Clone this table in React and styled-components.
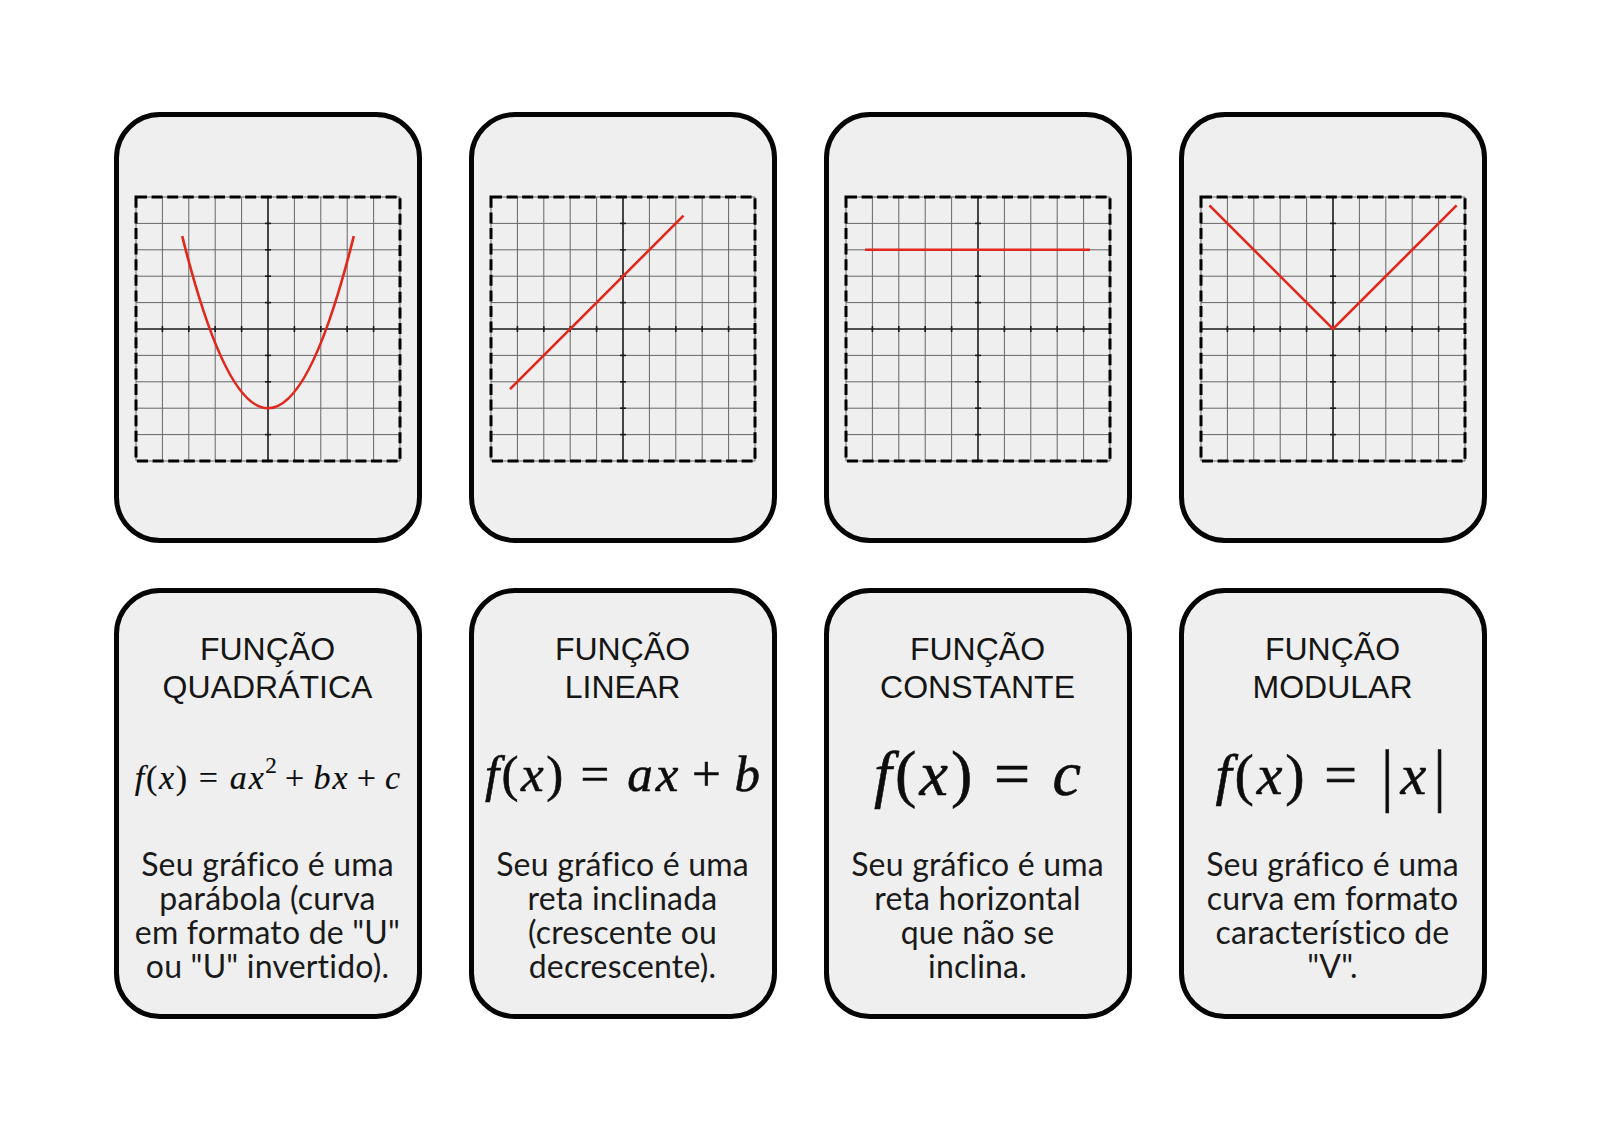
import React from "react";
import styled, { createGlobalStyle } from "styled-components";

const GlobalStyle = createGlobalStyle`
  html, body {
    margin: 0;
    padding: 0;
    background: #ffffff;
  }
  * {
    box-sizing: border-box;
  }
`;

const Page = styled.div`
  width: 1600px;
  height: 1131px;
  display: flex;
  align-items: center;
  justify-content: center;
`;

const Sheet = styled.div`
  display: grid;
  grid-template-columns: repeat(4, 308px);
  grid-auto-rows: 431px;
  column-gap: 47px;
  row-gap: 45px;
`;

const Card = styled.div`
  border: 5px solid #050505;
  border-radius: 46px;
  background: #efefef;
  display: flex;
  flex-direction: column;
  align-items: center;
`;

const GraphCard = styled(Card)`
  justify-content: center;
  padding-top: 3px;
`;

const TextCard = styled(Card)`
  padding-top: 37px;
`;

const Title = styled.h2`
  margin: 0;
  height: 76px;
  font-family: "Liberation Sans", Arial, sans-serif;
  font-weight: 400;
  font-size: 32px;
  line-height: 38px;
  color: #151515;
  text-align: center;
`;

const FormulaBox = styled.div`
  height: 100px;
  margin-top: ${(p) => (p.$lift ? 18 : 22)}px;
  display: flex;
  align-items: center;
  justify-content: center;
  font-family: "Liberation Serif", "Times New Roman", serif;
  font-size: ${(p) => p.$size}px;
  color: #0d0d0d;
  -webkit-text-stroke: ${(p) => (p.$lift ? 0.6 : 0.2)}px #0d0d0d;
  white-space: nowrap;
`;

const V = styled.i`
  font-style: italic;
  padding: 0 0.03em;
`;

const Paren = styled.span`
  padding: 0 0.02em;
`;

const Op = styled.span`
  margin: 0 ${(p) => (p.$wide ? 0.32 : 0.24)}em;
`;

const Sup = styled.sup`
  font-size: 0.68em;
  vertical-align: 0;
  position: relative;
  top: -0.55em;
  margin-left: 0.02em;
`;

const Bar = styled.span`
  display: inline-block;
  transform: scaleY(1.2);
  padding: 0 0.1em;
`;

const Desc = styled.p`
  margin: ${(p) => (p.$lift ? 23 : 19)}px 0 0;
  font-family: Lato, "Open Sans", sans-serif;
  font-weight: 400;
  font-size: 32px;
  line-height: 34px;
  letter-spacing: 0.2px;
  color: #1a1a1a;
  text-align: center;
  white-space: nowrap;
`;

const CELL = 26.4;
const C = 132;
const px = (u) => (C + u * CELL).toFixed(1);
const py = (v) => (C - v * CELL).toFixed(1);

function Plot({ d }) {
  const lines = [];
  for (let i = 0; i <= 10; i++) {
    const p = i * CELL;
    const axis = i === 5;
    lines.push(
      <line key={"v" + i} x1={p} y1={0} x2={p} y2={264}
        stroke={axis ? "#1a1a1a" : "#666"} strokeWidth={axis ? 1.6 : 1} />,
      <line key={"h" + i} x1={0} y1={p} x2={264} y2={p}
        stroke={axis ? "#1a1a1a" : "#666"} strokeWidth={axis ? 1.6 : 1} />
    );
    if (!axis && i > 0 && i < 10) {
      lines.push(
        <line key={"tx" + i} x1={p} y1={C - 3} x2={p} y2={C + 3} stroke="#1a1a1a" strokeWidth={1.6} />,
        <line key={"ty" + i} x1={C - 3} y1={p} x2={C + 3} y2={p} stroke="#1a1a1a" strokeWidth={1.6} />
      );
    }
  }
  return (
    <svg width="270" height="270" viewBox="-3 -3 270 270">
      {lines}
      <rect x="0" y="0" width="264" height="264" fill="none" stroke="#000"
        strokeWidth="3" strokeDasharray="11 4.6" />
      <path d={d} fill="none" stroke="#e2271c" strokeWidth="2.6" strokeLinejoin="miter" />
    </svg>
  );
}

const graphs = [
  `M${px(-3.25)} ${py(3.52)} Q${px(0)} ${py(-9.52)} ${px(3.25)} ${py(3.52)}`,
  `M${px(-4.28)} ${py(-2.28)} L${px(2.29)} ${py(4.29)}`,
  `M${px(-4.28)} ${py(3)} L${px(4.24)} ${py(3)}`,
  `M${px(-4.68)} ${py(4.68)} L${px(0)} ${py(0)} L${px(4.68)} ${py(4.68)}`,
];

const Fx = () => (
  <>
    <V>f</V><Paren>(</Paren><V>x</V><Paren>)</Paren><Op $wide>=</Op>
  </>
);

const cards = [
  {
    title: ["FUNÇÃO", "QUADRÁTICA"],
    size: 34,
    formula: (
      <>
        <Fx /><V>a</V><V>x</V><Sup>2</Sup><Op>+</Op><V>b</V><V>x</V><Op>+</Op><V>c</V>
      </>
    ),
    desc: ["Seu gráfico é uma", "parábola (curva", 'em formato de "U"', 'ou "U" invertido).'],
  },
  {
    title: ["FUNÇÃO", "LINEAR"],
    size: 51,
    lift: true,
    formula: (
      <>
        <Fx /><V>a</V><V>x</V><Op>+</Op><V>b</V>
      </>
    ),
    desc: ["Seu gráfico é uma", "reta inclinada", "(crescente ou", "decrescente)."],
  },
  {
    title: ["FUNÇÃO", "CONSTANTE"],
    size: 64,
    lift: true,
    formula: (
      <>
        <Fx /><V>c</V>
      </>
    ),
    desc: ["Seu gráfico é uma", "reta horizontal", "que não se", "inclina."],
  },
  {
    title: ["FUNÇÃO", "MODULAR"],
    size: 58,
    lift: true,
    formula: (
      <>
        <Fx /><Bar>|</Bar><V>x</V><Bar>|</Bar>
      </>
    ),
    desc: ["Seu gráfico é uma", "curva em formato", "característico de", '"V".'],
  },
];

const withBreaks = (lines) =>
  lines.map((l, i) => (
    <React.Fragment key={i}>
      {l}
      {i < lines.length - 1 && <br />}
    </React.Fragment>
  ));

export default function App() {
  return (
    <Page>
      <GlobalStyle />
      <Sheet>
        {graphs.map((d, i) => (
          <GraphCard key={"g" + i}>
            <Plot d={d} />
          </GraphCard>
        ))}
        {cards.map((c, i) => (
          <TextCard key={"t" + i}>
            <Title>{withBreaks(c.title)}</Title>
            <FormulaBox $size={c.size} $lift={c.lift}>{c.formula}</FormulaBox>
            <Desc $lift={c.lift}>{withBreaks(c.desc)}</Desc>
          </TextCard>
        ))}
      </Sheet>
    </Page>
  );
}
